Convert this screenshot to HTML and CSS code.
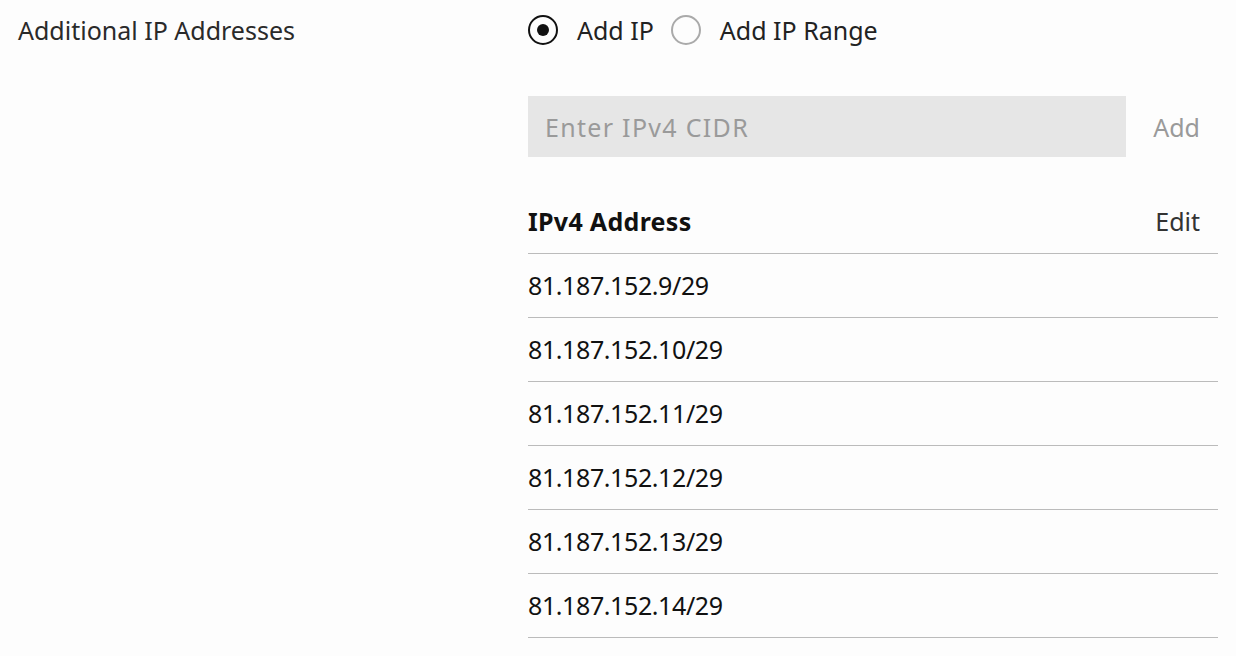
FILE: index.html
```html
<!DOCTYPE html>
<html lang="en">
<head>
<meta charset="utf-8">
<title>Additional IP Addresses</title>
<link rel="stylesheet" href="styles.css">
</head>
<body>
<div class="page">
  <div class="label">Additional IP Addresses</div>
  <div class="content">
    <div class="radio-row">
      <label class="radio checked"><span class="circle"><span class="dot"></span></span><span class="radio-text">Add IP</span></label>
      <label class="radio"><span class="circle"></span><span class="radio-text">Add IP Range</span></label>
    </div>
    <div class="input-row">
      <div class="input">Enter IPv4 CIDR</div>
      <div class="add-btn">Add</div>
    </div>
    <div class="table">
      <div class="row head"><span class="cell-title">IPv4 Address</span><span class="cell-edit">Edit</span></div>
      <div class="row"><span class="cell-ip">81.187.152.9/29</span></div>
      <div class="row"><span class="cell-ip">81.187.152.10/29</span></div>
      <div class="row"><span class="cell-ip">81.187.152.11/29</span></div>
      <div class="row"><span class="cell-ip">81.187.152.12/29</span></div>
      <div class="row"><span class="cell-ip">81.187.152.13/29</span></div>
      <div class="row"><span class="cell-ip">81.187.152.14/29</span></div>
    </div>
  </div>
</div>
</body>
</html>
```
FILE: styles.css
```css
html, body {
  margin: 0;
  padding: 0;
  background: #fdfdfd;
}
body {
  font-family: "Noto Sans", "Open Sans", "Liberation Sans", sans-serif;
  font-size: 25px;
  color: #111;
}
.page {
  display: grid;
  grid-template-columns: 528px 1fr;
  padding-right: 18px;
}
.label {
  padding-left: 18px;
  height: 60px;
  display: flex;
  align-items: center;
  color: #2a2a2a;
}
.content {
  display: flex;
  flex-direction: column;
}
.radio-row {
  height: 60px;
  margin-bottom: 2px;
  display: flex;
  align-items: center;
}
.radio {
  display: flex;
  align-items: center;
  margin-right: 17px;
  color: #222;
}
.circle {
  width: 30px;
  height: 30px;
  box-sizing: border-box;
  border: 2px solid #aaa;
  border-radius: 50%;
  display: flex;
  align-items: center;
  justify-content: center;
  margin-right: 19px;
}
.radio.checked .circle {
  border-color: #111;
}
.dot {
  width: 12px;
  height: 12px;
  border-radius: 50%;
  background: #111;
}
.input-row {
  margin-top: 34px;
  display: flex;
  align-items: center;
  height: 61px;
}
.input {
  flex: 1;
  height: 100%;
  background: #e6e6e6;
  color: #9a9a9a;
  display: flex;
  align-items: center;
  padding-left: 17px;
  box-sizing: border-box;
  letter-spacing: 1.3px;
}
.add-btn {
  width: 92px;
  text-align: right;
  padding-right: 18px;
  box-sizing: border-box;
  color: #9a9a9a;
}
.table {
  margin-top: 33px;
}
.row {
  height: 64px;
  padding-bottom: 2px;
  box-sizing: border-box;
  border-bottom: 1px solid #bbb;
  display: flex;
  align-items: center;
  justify-content: space-between;
  padding-right: 18px;
}
.row.head {
  font-weight: 700;
}
.cell-title {
  letter-spacing: 0.3px;
}
.cell-ip {
  letter-spacing: -0.4px;
}
.cell-edit {
  font-weight: 400;
  color: #333;
}
```
